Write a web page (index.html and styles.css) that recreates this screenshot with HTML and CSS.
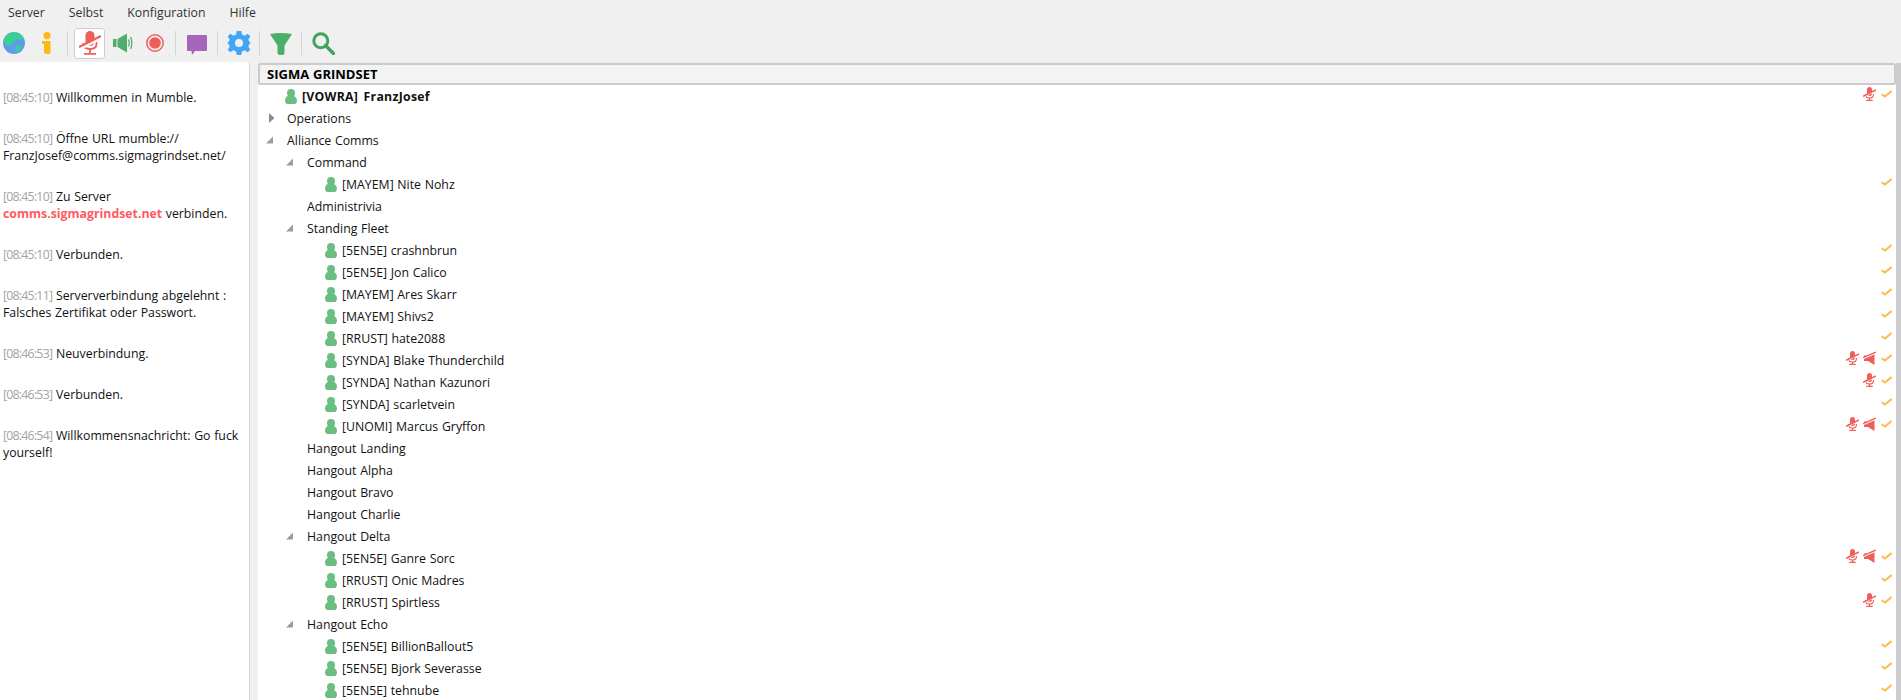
FILE: index.html
```html
<!DOCTYPE html>
<html lang="de">
<head>
    <meta charset="UTF-8">
    <title>Mumble</title>
    <link rel="stylesheet" href="styles.css">
</head>
<body>
    <!-- Icon sheet -->
    <svg class="icon-sheet" xmlns="http://www.w3.org/2000/svg">
        <symbol id="i-globe" viewBox="0 0 22 22">
            <circle cx="11" cy="11" r="11" fill="#5f9bec"/>
            <path d="M6 2 C9 0.4 14 0 17 2 C19 3.5 20 5 21 7 L16 8 L14 6 L12 9 L9 10 L8 13 L5 14 L1 11 C0.5 7 2.5 4 6 2 Z" fill="#34d48c"/>
            <path d="M13 14 L17 13 L18 16 L14 20 L12 18 Z" fill="#34d48c"/>
        </symbol>
        <symbol id="i-info" viewBox="0 0 12 22">
            <circle cx="6" cy="3.6" r="3.6" fill="#fdb813"/>
            <path d="M1 9 H9.5 V20 Q9.5 22 7.5 22 H5 Q3 22 3 20 V12 H1 Z" fill="#fdb813"/>
        </symbol>
        <symbol id="i-mic" viewBox="0 0 22 24">
            <rect x="6.5" y="0" width="9" height="15" rx="4.5" fill="#ef5f5a"/>
            <path d="M4.5 12 V13 Q4.5 18 11 18 Q17.5 18 17.5 13 V11" fill="none" stroke="#ef5f5a" stroke-width="1.8"/>
            <path d="M11 18 V22 M5 22.8 H17" fill="none" stroke="#ef5f5a" stroke-width="1.8"/>
            <path d="M0 18.4 L22 7.4" stroke="#ffffff" stroke-width="2.6"/>
            <path d="M0 16 L22 5" stroke="#ef5f5a" stroke-width="2.4"/>
        </symbol>
        <symbol id="i-mic-small" viewBox="0 0 13 14">
            <rect x="4" y="0" width="5" height="9" rx="2.5" fill="#ef5f5a"/>
            <path d="M2.6 7 V8 Q2.6 11 6.5 11 Q10.4 11 10.4 8 V7" fill="none" stroke="#ef5f5a" stroke-width="1.1"/>
            <path d="M6.5 11 V13 M3.2 13.4 H9.8" fill="none" stroke="#ef5f5a" stroke-width="1.2"/>
            <path d="M0 10.4 L13 3.8" stroke="#ffffff" stroke-width="1"/>
            <path d="M0 9.4 L13 2.8" stroke="#ef5f5a" stroke-width="1.5"/>
        </symbol>
        <symbol id="i-speaker" viewBox="0 0 20 20">
            <path d="M0 6 H3.5 V14 H0 Z M4.5 6 L14 0.5 V19.5 L4.5 14 Z" fill="#4fae6c"/>
            <path d="M15.6 6.5 Q16.8 10 15.6 13.5 M17.6 4 Q20 10 17.6 16" fill="none" stroke="#4fae6c" stroke-width="1.3"/>
        </symbol>
        <symbol id="i-speaker-off" viewBox="0 0 13 14">
            <path d="M1 4.5 H5 L11.5 1 V14 L5 10 H1 Z" fill="#ef5f5a"/>
            <path d="M0 7.6 L13 2" stroke="#ffffff" stroke-width="1.2"/>
            <path d="M0 6.6 L13 1" stroke="#ef5f5a" stroke-width="1.3"/>
        </symbol>
        <symbol id="i-record" viewBox="0 0 18 18">
            <circle cx="9" cy="9" r="8.2" fill="none" stroke="#ef5f5a" stroke-width="1.5"/>
            <circle cx="9" cy="9" r="5.8" fill="#ef5f5a"/>
        </symbol>
        <symbol id="i-chat" viewBox="0 0 20 20">
            <path d="M1 0 H19 Q20 0 20 1 V15 Q20 16 19 16 H8 L5 20 L4.5 16 H1 Q0 16 0 15 V1 Q0 0 1 0 Z" fill="#a566b9"/>
        </symbol>
        <symbol id="i-gear" viewBox="0 0 24 24">
            <path d="M9.8 0 H14.2 L15 3.6 L17.6 4.7 L20.7 2.7 L23.3 5.3 L21.3 8.4 L22.4 11 L24 12 L22.4 13 L21.3 15.6 L23.3 18.7 L20.7 21.3 L17.6 19.3 L15 20.4 L14.2 24 H9.8 L9 20.4 L6.4 19.3 L3.3 21.3 L0.7 18.7 L2.7 15.6 L1.6 13 L0 12 L1.6 11 L2.7 8.4 L0.7 5.3 L3.3 2.7 L6.4 4.7 L9 3.6 Z M12 8 A4 4 0 1 0 12 16 A4 4 0 1 0 12 8 Z" fill="#42a5f5" fill-rule="evenodd"/>
        </symbol>
        <symbol id="i-filter" viewBox="0 0 22 22">
            <path d="M0 1 Q11 -1 22 1 L14.5 12.5 V20 Q14.5 22 11 22 Q7.5 22 7.5 20 V12.5 Z" fill="#4caf68"/>
        </symbol>
        <symbol id="i-search" viewBox="0 0 23 23">
            <circle cx="8.8" cy="8.8" r="7" fill="none" stroke="#3fa35e" stroke-width="3"/>
            <path d="M13.5 13.5 L21.5 21.5" stroke="#3fa35e" stroke-width="3.4" stroke-linecap="round"/>
        </symbol>
        <symbol id="i-user" viewBox="0 0 12 15">
            <circle cx="6" cy="4" r="4" fill="#6abe82"/>
            <path d="M3.4 6.5 H8.6 Q12 8.6 12 11.4 Q12 15 8.5 15 H3.5 Q0 15 0 11.4 Q0 8.6 3.4 6.5 Z" fill="#6abe82"/>
        </symbol>
        <symbol id="i-check" viewBox="0 0 11 8">
            <path d="M0.5 4.2 L4 6.6 L10.5 1" fill="none" stroke="#fbbc4b" stroke-width="2"/>
        </symbol>
        <symbol id="i-open" viewBox="0 0 21 12">
            <path d="M0 9.5 H7 V2.5 Z" fill="#9c9c9c"/>
        </symbol>
        <symbol id="i-closed" viewBox="0 0 21 12">
            <path d="M3 1 L8.5 6 L3 11 Z" fill="#8c8c8c"/>
        </symbol>
    </svg>

    <!-- Menu -->
    <nav class="menubar">
        <span>Server</span>
        <span>Selbst</span>
        <span>Konfiguration</span>
        <span>Hilfe</span>
    </nav>

    <!-- Toolbar -->
    <div class="toolbar">
        <div class="tool"><svg class="ic-globe"><use href="#i-globe"/></svg></div>
        <div class="tool"><svg class="ic-info"><use href="#i-info"/></svg></div>
        <div class="tool-sep"></div>
        <div class="tool tool-on"><svg class="ic-mic"><use href="#i-mic"/></svg></div>
        <div class="tool"><svg class="ic-speaker"><use href="#i-speaker"/></svg></div>
        <div class="tool"><svg class="ic-record"><use href="#i-record"/></svg></div>
        <div class="tool-sep"></div>
        <div class="tool"><svg class="ic-chat"><use href="#i-chat"/></svg></div>
        <div class="tool-sep"></div>
        <div class="tool"><svg class="ic-gear"><use href="#i-gear"/></svg></div>
        <div class="tool-sep"></div>
        <div class="tool"><svg class="ic-filter"><use href="#i-filter"/></svg></div>
        <div class="tool-sep"></div>
        <div class="tool"><svg class="ic-search"><use href="#i-search"/></svg></div>
    </div>

    <main class="panes">
        <!-- Chat log -->
        <section class="log">
            <p><span class="time">[08:45:10]</span> Willkommen in Mumble.</p>
            <p><span class="time">[08:45:10]</span> Öffne URL mumble://<br>FranzJosef@comms.sigmagrindset.net/</p>
            <p><span class="time">[08:45:10]</span> Zu Server<br><b class="host">comms.sigmagrindset.net</b> verbinden.</p>
            <p><span class="time">[08:45:10]</span> Verbunden.</p>
            <p><span class="time">[08:45:11]</span> Serververbindung abgelehnt :<br>Falsches Zertifikat oder Passwort.</p>
            <p><span class="time">[08:46:53]</span> Neuverbindung.</p>
            <p><span class="time">[08:46:53]</span> Verbunden.</p>
            <p><span class="time">[08:46:54]</span> Willkommensnachricht: Go fuck<br>yourself!</p>
        </section>

        <!-- Channel tree -->
        <section class="tree">
            <header class="tree-head">SIGMA GRINDSET</header>
            <div class="row user d1 me"><svg class="ic-user"><use href="#i-user"/></svg><span class="name">[VOWRA] FranzJosef</span><svg class="ic-flag"><use href="#i-mic-small"/></svg><svg class="ic-check"><use href="#i-check"/></svg></div>
            <div class="row chan d1"><svg class="twisty"><use href="#i-closed"/></svg><span class="name">Operations</span></div>
            <div class="row chan d1"><svg class="twisty"><use href="#i-open"/></svg><span class="name">Alliance Comms</span></div>
            <div class="row chan d2"><svg class="twisty"><use href="#i-open"/></svg><span class="name">Command</span></div>
            <div class="row user d3"><svg class="ic-user"><use href="#i-user"/></svg><span class="name">[MAYEM] Nite Nohz</span><svg class="ic-check"><use href="#i-check"/></svg></div>
            <div class="row chan d2"><span class="twisty"></span><span class="name">Administrivia</span></div>
            <div class="row chan d2"><svg class="twisty"><use href="#i-open"/></svg><span class="name">Standing Fleet</span></div>
            <div class="row user d3"><svg class="ic-user"><use href="#i-user"/></svg><span class="name">[5EN5E] crashnbrun</span><svg class="ic-check"><use href="#i-check"/></svg></div>
            <div class="row user d3"><svg class="ic-user"><use href="#i-user"/></svg><span class="name">[5EN5E] Jon Calico</span><svg class="ic-check"><use href="#i-check"/></svg></div>
            <div class="row user d3"><svg class="ic-user"><use href="#i-user"/></svg><span class="name">[MAYEM] Ares Skarr</span><svg class="ic-check"><use href="#i-check"/></svg></div>
            <div class="row user d3"><svg class="ic-user"><use href="#i-user"/></svg><span class="name">[MAYEM] Shivs2</span><svg class="ic-check"><use href="#i-check"/></svg></div>
            <div class="row user d3"><svg class="ic-user"><use href="#i-user"/></svg><span class="name">[RRUST] hate2088</span><svg class="ic-check"><use href="#i-check"/></svg></div>
            <div class="row user d3"><svg class="ic-user"><use href="#i-user"/></svg><span class="name">[SYNDA] Blake Thunderchild</span><svg class="ic-flag"><use href="#i-mic-small"/></svg><svg class="ic-flag"><use href="#i-speaker-off"/></svg><svg class="ic-check"><use href="#i-check"/></svg></div>
            <div class="row user d3"><svg class="ic-user"><use href="#i-user"/></svg><span class="name">[SYNDA] Nathan Kazunori</span><svg class="ic-flag"><use href="#i-mic-small"/></svg><svg class="ic-check"><use href="#i-check"/></svg></div>
            <div class="row user d3"><svg class="ic-user"><use href="#i-user"/></svg><span class="name">[SYNDA] scarletvein</span><svg class="ic-check"><use href="#i-check"/></svg></div>
            <div class="row user d3"><svg class="ic-user"><use href="#i-user"/></svg><span class="name">[UNOMI] Marcus Gryffon</span><svg class="ic-flag"><use href="#i-mic-small"/></svg><svg class="ic-flag"><use href="#i-speaker-off"/></svg><svg class="ic-check"><use href="#i-check"/></svg></div>
            <div class="row chan d2"><span class="twisty"></span><span class="name">Hangout Landing</span></div>
            <div class="row chan d2"><span class="twisty"></span><span class="name">Hangout Alpha</span></div>
            <div class="row chan d2"><span class="twisty"></span><span class="name">Hangout Bravo</span></div>
            <div class="row chan d2"><span class="twisty"></span><span class="name">Hangout Charlie</span></div>
            <div class="row chan d2"><svg class="twisty"><use href="#i-open"/></svg><span class="name">Hangout Delta</span></div>
            <div class="row user d3"><svg class="ic-user"><use href="#i-user"/></svg><span class="name">[5EN5E] Ganre Sorc</span><svg class="ic-flag"><use href="#i-mic-small"/></svg><svg class="ic-flag"><use href="#i-speaker-off"/></svg><svg class="ic-check"><use href="#i-check"/></svg></div>
            <div class="row user d3"><svg class="ic-user"><use href="#i-user"/></svg><span class="name">[RRUST] Onic Madres</span><svg class="ic-check"><use href="#i-check"/></svg></div>
            <div class="row user d3"><svg class="ic-user"><use href="#i-user"/></svg><span class="name">[RRUST] Spirtless</span><svg class="ic-flag"><use href="#i-mic-small"/></svg><svg class="ic-check"><use href="#i-check"/></svg></div>
            <div class="row chan d2"><svg class="twisty"><use href="#i-open"/></svg><span class="name">Hangout Echo</span></div>
            <div class="row user d3"><svg class="ic-user"><use href="#i-user"/></svg><span class="name">[5EN5E] BillionBallout5</span><svg class="ic-check"><use href="#i-check"/></svg></div>
            <div class="row user d3"><svg class="ic-user"><use href="#i-user"/></svg><span class="name">[5EN5E] Bjork Severasse</span><svg class="ic-check"><use href="#i-check"/></svg></div>
            <div class="row user d3"><svg class="ic-user"><use href="#i-user"/></svg><span class="name">[5EN5E] tehnube</span><svg class="ic-check"><use href="#i-check"/></svg></div>
        </section>

        <div class="scrollbar"></div>
    </main>
</body>
</html>
```

FILE: styles.css
```css
/* Basic Styling */
* {
    box-sizing: border-box;
    margin: 0;
    padding: 0;
}
body {
    font-family: "Open Sans", Arial, sans-serif;
    font-size: 12.3px;
    word-spacing: 0.5px;
    background-color: #f0f0f0;
    color: #111;
    display: flex;
    flex-direction: column;
    height: 100vh;
    overflow: hidden;
}
.icon-sheet {
    display: none;
}

/* Menu */
.menubar {
    display: flex;
    align-items: center;
    gap: 24px;
    height: 24px;
    padding-left: 8px;
    color: #333;
}

/* Toolbar */
.toolbar {
    display: flex;
    align-items: center;
    height: 38px;
    margin-left: -3px;
}
.tool {
    display: flex;
    align-items: center;
    justify-content: center;
    width: 33px;
    height: 31px;
}
.tool-on {
    width: 31px;
    margin-left: 2px;
    background-color: #fff;
    border: 1px solid #cfcfcf;
    border-radius: 3px;
}
.tool-sep {
    width: 1px;
    height: 24px;
    margin: 0 4px;
    background-color: #d4d4d4;
}
.ic-globe { width: 22px; height: 22px; }
.ic-info { width: 12px; height: 22px; }
.ic-mic { width: 22px; height: 24px; }
.ic-speaker { width: 20px; height: 20px; margin-left: 2px; }
.ic-record { width: 18px; height: 18px; }
.ic-chat { width: 20px; height: 20px; margin-top: 4px; }
.ic-gear { width: 24px; height: 24px; }
.ic-filter { width: 22px; height: 22px; margin-top: 2px; }
.ic-search { width: 23px; height: 23px; margin-left: 2px; }

/* Panes */
.panes {
    flex: 1;
    display: flex;
    min-height: 0;
}

/* Chat log */
.log {
    width: 250px;
    padding: 27px 3px 0;
    background-color: #fff;
    border-right: 1px solid #d2d2d2;
    border-top-right-radius: 3px;
    line-height: 17px;
}
.log p {
    margin-bottom: 24px;
}
.time {
    color: #a3a3a3;
    letter-spacing: -0.75px;
}
.host {
    color: #ff5a5f;
}

/* Channel tree */
.tree {
    flex: 1;
    margin-left: 8px;
    margin-top: 1px;
    background-color: #fff;
}
.tree-head {
    height: 22px;
    padding-left: 7px;
    font-size: 13px;
    line-height: 18px;
    font-weight: 700;
    color: #000;
    background-color: #f3f3f3;
    border: 2px solid #cbcbcb;
    border-radius: 2px;
}
.row {
    display: flex;
    align-items: center;
    height: 22px;
    padding-right: 4px;
}
.name {
    flex: 1;
}
.chan.d1 { padding-left: 8px; }
.chan.d2 { padding-left: 28px; }
.user.d1 { padding-left: 27px; }
.user.d3 { padding-left: 67px; }
.twisty {
    flex: none;
    width: 21px;
    height: 12px;
}
.ic-user {
    flex: none;
    width: 12px;
    height: 15px;
    margin-right: 5px;
}
.me .name {
    font-weight: 700;
    word-spacing: 2px;
    letter-spacing: 0.25px;
}
.ic-flag {
    width: 13px;
    height: 14px;
    margin: 0 4px 4px 0;
}
.ic-check {
    width: 11px;
    height: 8px;
    margin: 0 0 4px 1px;
}

.scrollbar {
    width: 5px;
    margin-top: 1px;
    background-color: #cdcdcd;
}
```
